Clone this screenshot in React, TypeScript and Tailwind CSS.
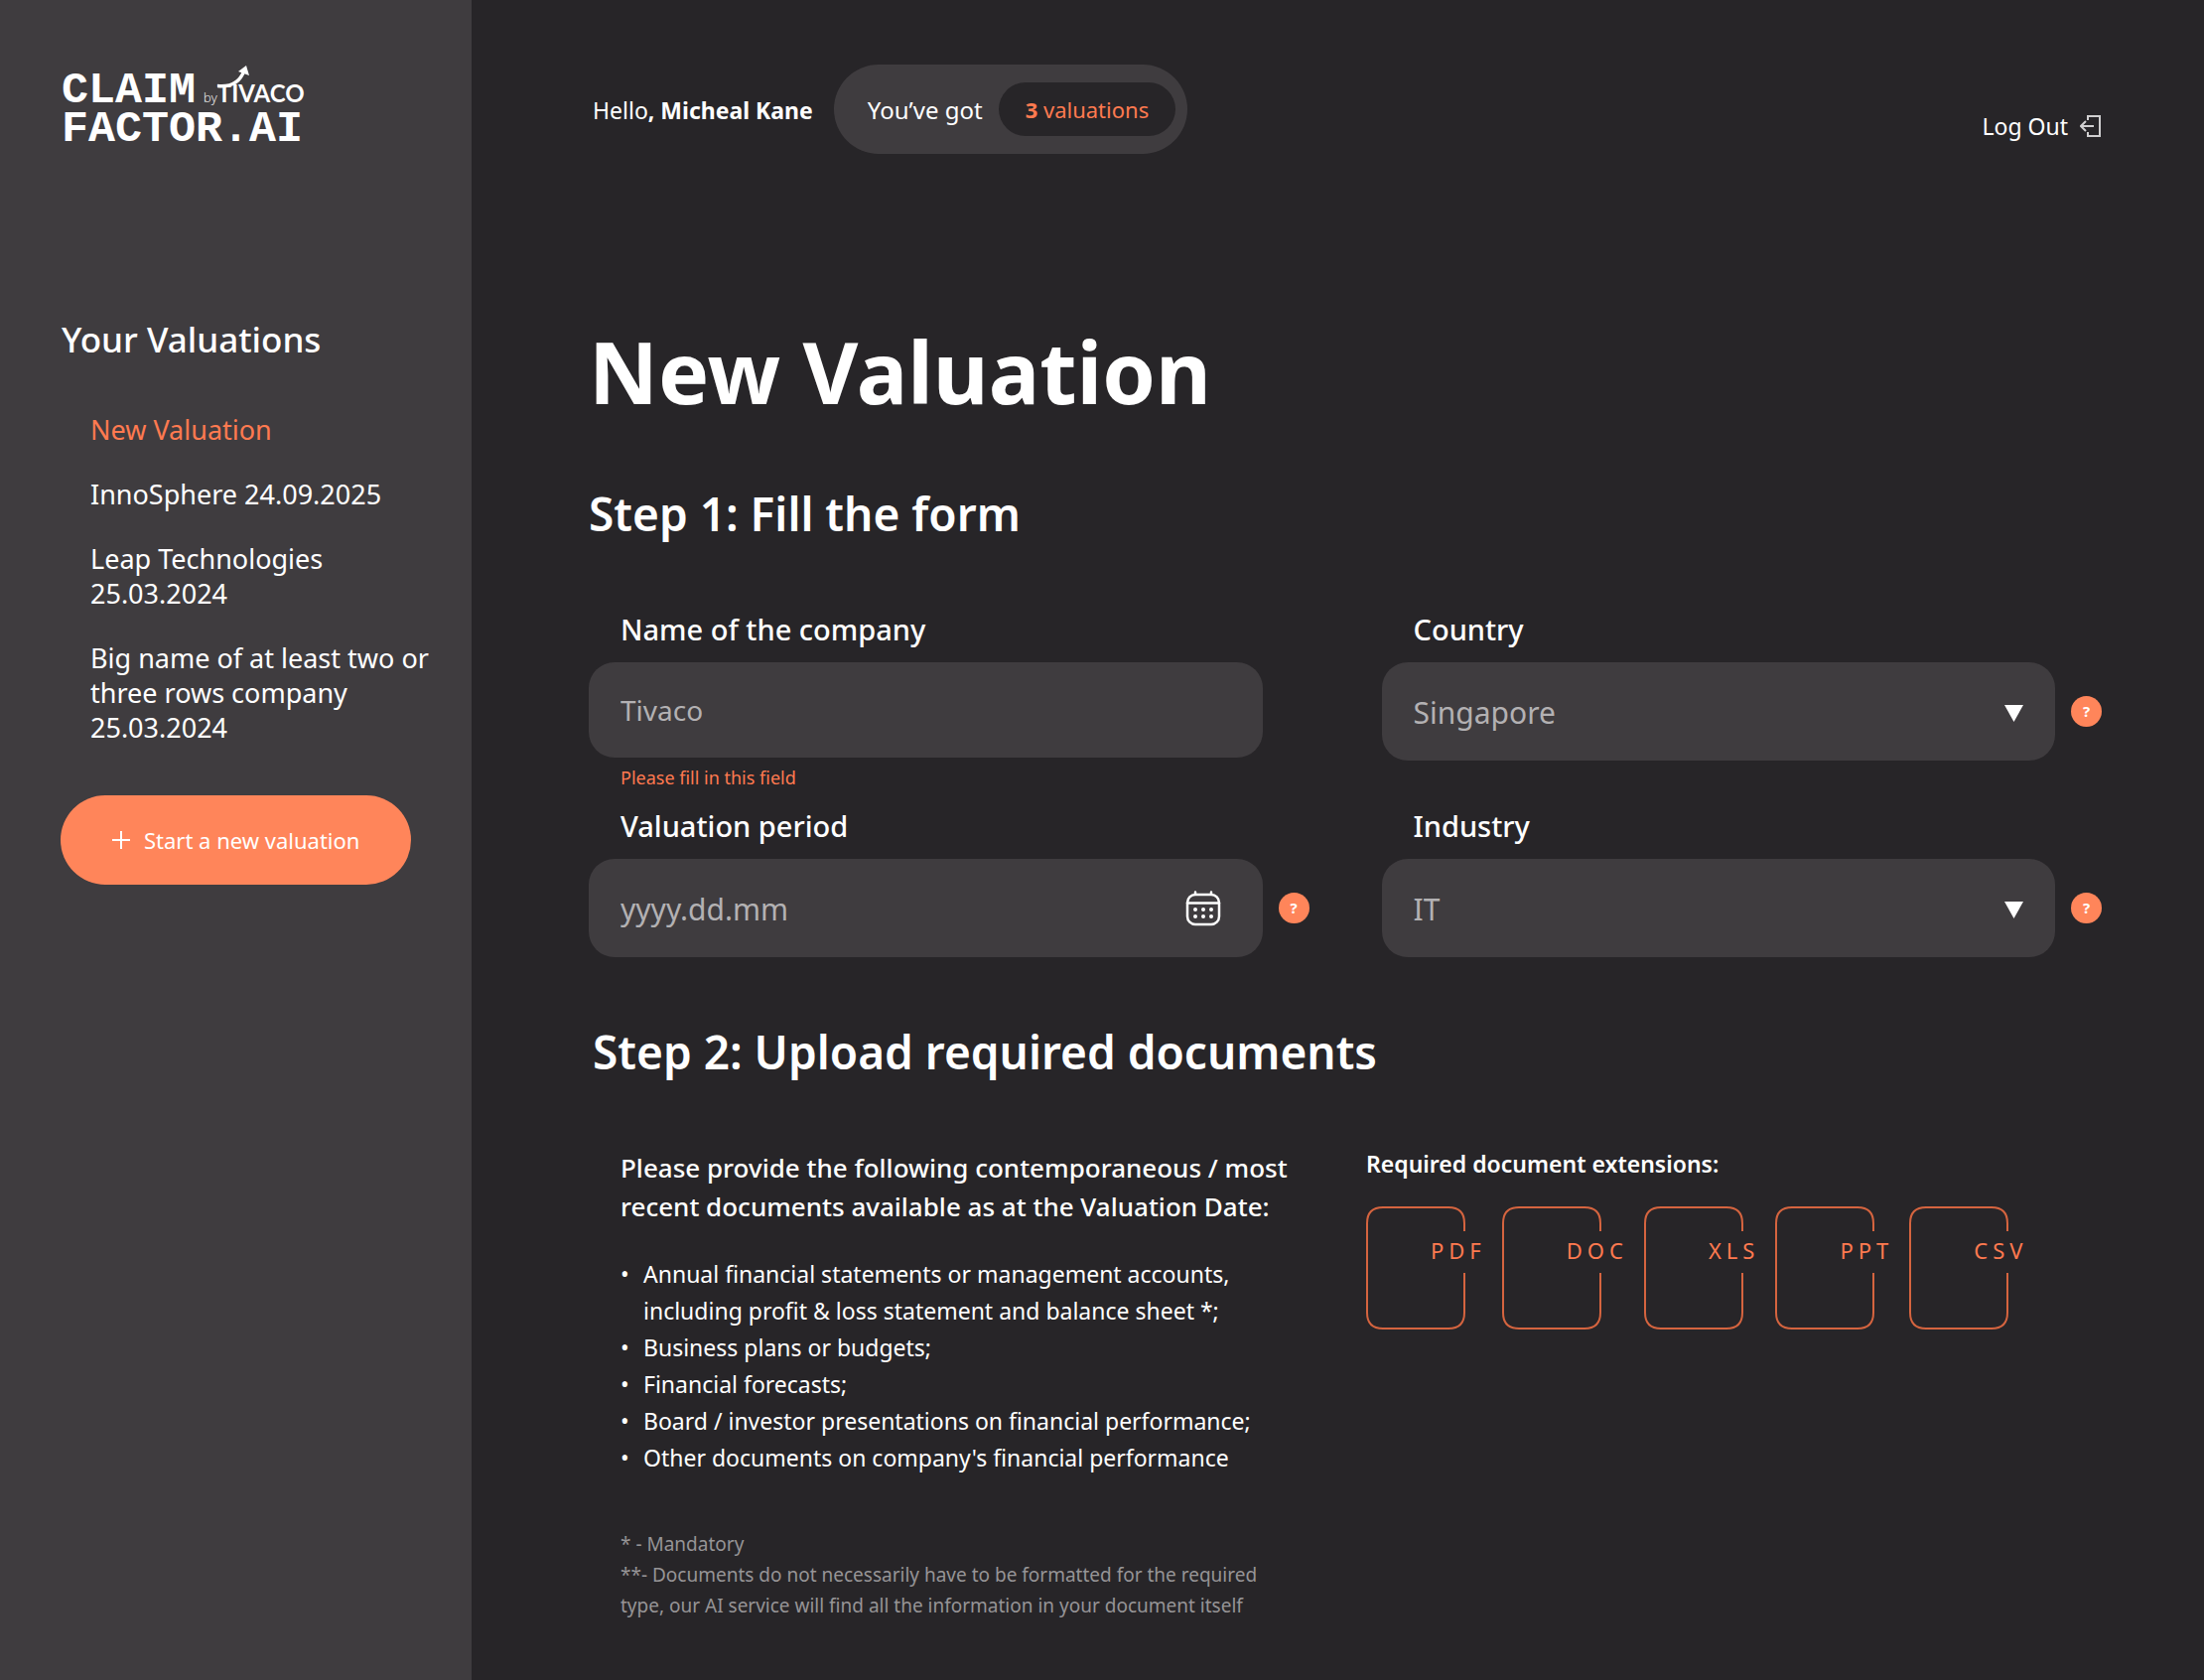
import { useState } from 'react'
import type { ReactNode } from 'react'
import { twMerge } from 'tailwind-merge'

const valuations = ['New Valuation', 'InnoSphere 24.09.2025', 'Leap Technologies 25.03.2024', 'Big name of at least two or three rows company 25.03.2024']

const documents = [
    'Annual financial statements or management accounts, including profit & loss statement and balance sheet *;',
    'Business plans or budgets;',
    'Financial forecasts;',
    'Board / investor presentations on financial performance;',
    "Other documents on company's financial performance",
]

const extensions = ['PDF', 'DOC', 'XLS', 'PPT', 'CSV']

export default function App() {
    return <div className="flex min-h-screen bg-[#272528] font-['Noto_Sans','Open_Sans',sans-serif] text-white">
              <Sidebar />
              <main className="min-w-0 grow pl-[118px] pr-[103px] pt-[65px] pb-[50px]">
                    <Header />
                    <h1 className="mt-[171px] text-[86px] leading-[96px] font-bold">New Valuation</h1>
                    <ValuationForm />
                    <Documents />
              </main>
        </div>
}

function Sidebar() {

    const [active,setActive] = useState(0)

    return <aside className="w-[475px] shrink-0 bg-[#3f3c3f] px-[61px] pt-[72px]">
               <Logo />
               <h2 className="mt-[174px] pl-px text-[35px] leading-[48px] font-medium">Your Valuations</h2>
               <nav className="mt-[49px] -mr-6 pl-[30px]">
                     <ul className="flex flex-col gap-[30px] text-[27px] leading-[35px]">
                         {valuations.map((name,i) => <li key={name}>
                             <a href="#" onClick={() => setActive(i)} className={twMerge("block hover:text-[#ff855a]", active === i && "text-[#ff7a50]")}>{name}</a>
                         </li>)}
                     </ul>
               </nav>
               <button type="button" className="mt-[51px] flex h-[90px] w-full items-center gap-[14px] rounded-full bg-[#ff855a] pl-[52px] text-[22px] whitespace-nowrap cursor-pointer">
                     <svg width="18" height="18" viewBox="0 0 18 18" stroke="currentColor" strokeWidth="2"><path d="M9 0v18M0 9h18" /></svg>
                     Start a new valuation
               </button>
        </aside>
}

function Logo() {
    return <a href="#" className="block h-[72px] pl-px font-['Liberation_Mono',monospace] text-[45px] leading-[39px] font-bold">
               <span className="flex h-[39px] items-baseline">
                     CLAIM
                     <span className="ml-[8px] font-['Open_Sans',sans-serif] text-[13px] leading-none font-light">by</span>
                     <span className="relative font-['Lato',sans-serif] text-[24px] leading-none">
                         TIVACO
                         <svg className="absolute bottom-[17px] left-0" width="34" height="24" viewBox="0 0 34 24" fill="none">
                             <path d="M0 21.500C14 23 23 17 27 6" stroke="currentColor" strokeWidth="3.500" />
                             <path d="M29 1L32 11L21 7Z" fill="currentColor" />
                         </svg>
                     </span>
               </span>
               <span className="block">FACTOR.AI</span>
        </a>
}

function Header() {
    return <header className="flex h-[90px] items-center pl-1">
               <p className="pt-[2px] text-[23px]">Hello<b className="font-bold">, Micheal Kane</b></p>
               <div className="ml-[21px] flex h-full items-center gap-4 rounded-full bg-[#3f3c3f] pl-[34px] pr-3 text-[24px]">
                     <span className="pt-[2px]">You’ve got</span>
                     <span className="flex h-[54px] items-center rounded-full bg-[#272528] px-[27px] text-[22px] whitespace-pre text-[#ff7a50]"><b>3</b> valuations</span>
               </div>
               <button type="button" className="mt-[34px] ml-auto flex items-center gap-3 text-[23px] cursor-pointer">
                     Log Out
                     <svg width="22" height="22" viewBox="0 0 22 22" fill="none" stroke="#d0cfd0" strokeWidth="2">
                         <path d="M8 5V1h12v20H8v-4" />
                         <path d="M14 11H2M6 6l-5 5 5 5" />
                     </svg>
               </button>
        </header>
}

function ValuationForm() {
    return <form>
               <h2 className="mt-[67px] text-[46px] leading-[56px] font-semibold">Step 1: Fill the form</h2>
               <div className="mt-[71px] grid grid-cols-2 gap-x-[73px] gap-y-[17px]">
                     <Field id="company" label="Name of the company" error="Please fill in this field">
                         <input id="company" type="text" placeholder="Tivaco" className="h-[96px] w-full rounded-[26px] bg-[#3f3c3f] px-8 text-[28px] outline-none placeholder:text-[#b3b1b3]" />
                     </Field>
                     <Field id="country" label="Country" help>
                         <Select id="country" options={['Singapore', 'Malaysia', 'Indonesia']} />
                     </Field>
                     <Field id="period" label="Valuation period" help>
                         <input id="period" type="text" placeholder="yyyy.dd.mm" className="h-[99px] w-full rounded-[26px] bg-[#3f3c3f] pt-[2px] pl-8 pr-24 text-[30px] outline-none placeholder:text-[#b3b1b3]" />
                         <button type="button" aria-label="Open calendar" className="absolute top-[32px] right-[42px] cursor-pointer"><CalendarIcon /></button>
                     </Field>
                     <Field id="industry" label="Industry" help>
                         <Select id="industry" options={['IT', 'Finance', 'Retail']} />
                     </Field>
               </div>
        </form>
}

function Field({id, label, error, help, children}: {id: string, label: string, error?: string, help?: boolean, children: ReactNode}) {
    return <div className="grid grid-cols-[1fr_31px] content-start gap-x-4">
               <label htmlFor={id} className="col-span-2 mb-[15px] pl-8 text-[29px] leading-[36px] font-medium">{label}</label>
               <div className="relative">{children}</div>
               {help && <button type="button" aria-label={`About ${label}`} className="size-[31px] self-center rounded-full bg-[#ff855a] text-[15px] font-bold cursor-pointer">?</button>}
               {error && <p className="col-span-2 mt-[6px] pl-8 text-[18px] leading-[28px] text-[#ff7a50]">{error}</p>}
        </div>
}

function Select({id, options}: {id: string, options: string[]}) {
    return <>
        <select id={id} className="block h-[99px] w-full appearance-none rounded-[26px] bg-[#3f3c3f] px-8 pt-[2px] text-[30px] text-[#b3b1b3] outline-none">
            {options.map(option => <option key={option}>{option}</option>)}
        </select>
        <svg className="pointer-events-none absolute top-[43px] right-[32px]" width="19" height="17" viewBox="0 0 19 17" fill="white"><path d="M0 0h19L9.500 17z" /></svg>
    </>
}

function CalendarIcon() {
    return <svg width="36" height="36" viewBox="0 0 36 36" fill="none" stroke="white" strokeWidth="2.500" strokeLinecap="round">
               <rect x="2" y="4" width="32" height="30" rx="8" />
               <path d="M2 12.500h32M10 1.500v2M26 1.500v2" />
               <path d="M10 19h.01M18 19h.01M26 19h.01M10 26h.01M18 26h.01M26 26h.01" strokeWidth="4" />
        </svg>
}

function Documents() {
    return <section>
               <h2 className="mt-[67px] pl-1 text-[46px] leading-[56px] font-semibold">Step 2: Upload required documents</h2>
               <div className="mt-[67px] grid grid-cols-[751px_1fr] gap-x-8">
                     <div className="pt-[3px] pl-8">
                         <h3 className="text-[26px] leading-[39px] font-medium">Please provide the following contemporaneous / most<br />recent documents available as at the Valuation Date:</h3>
                         <ul className="mt-[30px] max-w-[660px] text-[23px] leading-[37px]">
                             {documents.map(text => <li key={text} className="flex before:w-[23px] before:shrink-0 before:content-['•']">{text}</li>)}
                         </ul>
                         <div className="mt-[53px] text-[19px] leading-[31px] text-[#969496]">
                             <p>* - Mandatory</p>
                             <p>**- Documents do not necessarily have to be formatted for the required<br />type, our AI service will find all the information in your document itself</p>
                         </div>
                     </div>
                     <div>
                         <h3 className="text-[23px] leading-[36px] font-semibold">Required document extensions:</h3>
                         <ul className="mt-[25px] flex flex-wrap gap-4">
                             {extensions.map(name => <li key={name}><FileBadge name={name} /></li>)}
                         </ul>
                     </div>
               </div>
        </section>
}

// page outline with a gap on the right edge where the extension goes through
function FileBadge({name}: {name: string}) {
    return <div className="grid text-[#ff7a50]">
               <svg className="col-start-1 row-start-1" width="100" height="124" viewBox="0 0 100 124" fill="none" stroke="#d5643f" strokeWidth="2">
                   <path d="M99 25V17Q99 1 83 1H17Q1 1 1 17V107Q1 123 17 123H83Q99 123 99 107V67" />
               </svg>
               <span className="col-start-1 row-start-1 pt-[29px] pl-[65px] text-[22px] leading-[30px] tracking-[5px]">{name}</span>
        </div>
}
